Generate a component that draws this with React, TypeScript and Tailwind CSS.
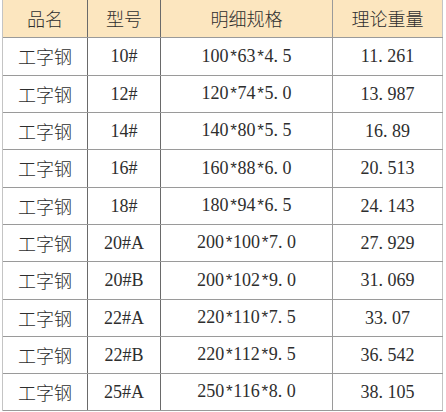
import React from "react";

const rows: [string, string, string, string][] = [
  ["工字钢", "10#", "100*63*4.5", "11.261"],
  ["工字钢", "12#", "120*74*5.0", "13.987"],
  ["工字钢", "14#", "140*80*5.5", "16.89"],
  ["工字钢", "16#", "160*88*6.0", "20.513"],
  ["工字钢", "18#", "180*94*6.5", "24.143"],
  ["工字钢", "20#A", "200*100*7.0", "27.929"],
  ["工字钢", "20#B", "200*102*9.0", "31.069"],
  ["工字钢", "22#A", "220*110*7.5", "33.07"],
  ["工字钢", "22#B", "220*112*9.5", "36.542"],
  ["工字钢", "25#A", "250*116*8.0", "38.105"],
];

const heights = ["h-[38px]", "h-[38px]", "h-[37px]", "h-[37px]", "h-[38px]", "h-[37px]", "h-[37px]", "h-[38px]", "h-[37px]", "h-[37px]", "h-[37px]"];

const cjk = "font-['Noto_Sans_CJK_SC',sans-serif] font-light";
const num = "font-['Liberation_Serif','Noto_Sans_CJK_SC',serif]";

function Num({ text }: { text: string }) {
  const chars = text.split("");
  return (
    <span className="whitespace-nowrap">
      {chars.map((c, i) =>
        c === "." ? (
          <span key={i} className="inline-block w-[9px]">.</span>
        ) : c === "*" ? (
          <span key={i} className="inline-block w-[9px] text-center font-['Liberation_Mono',monospace] text-[17px]">*</span>
        ) : (
          <React.Fragment key={i}>{c}</React.Fragment>
        )
      )}
    </span>
  );
}

export default function App() {
  return (
    <div className="w-[446px] h-[412px] bg-white text-[#2e2e2e]">
      <div className="ml-[2px] w-[441px] border-l border-l-[#c4c4c4]">
        <div className={`flex ${heights[0]} bg-[#fce6bf] border-b border-b-[#9a9a9a] ${cjk} text-[18px]`}>
          <div className="w-[85px] flex items-center justify-center border-r border-r-[#6a6a6a]">品名</div>
          <div className="w-[73px] flex items-center justify-center border-r border-r-[#6a6a6a]">型号</div>
          <div className="w-[172px] flex items-center justify-center border-r border-r-[#9a9a9a]">明细规格</div>
          <div className="w-[110px] flex items-center justify-center border-r border-r-[#c4c4c4]">理论重量</div>
        </div>
        {rows.map((r, i) => (
          <div key={i} className={`flex ${heights[i + 1]} border-b border-b-[#9a9a9a]`}>
            <div className={`w-[85px] flex items-center justify-center border-r border-r-[#6a6a6a] ${cjk} text-[18px]`}>{r[0]}</div>
            <div className={`w-[73px] flex items-center justify-center border-r border-r-[#6a6a6a] ${num} text-[18px]`}>{r[1]}</div>
            <div className={`w-[172px] flex items-center justify-center border-r border-r-[#9a9a9a] ${num} text-[18px]`}><Num text={r[2]} /></div>
            <div className={`w-[110px] flex items-center justify-center border-r border-r-[#c4c4c4] ${num} text-[18px]`}><Num text={r[3]} /></div>
          </div>
        ))}
      </div>
    </div>
  );
}
